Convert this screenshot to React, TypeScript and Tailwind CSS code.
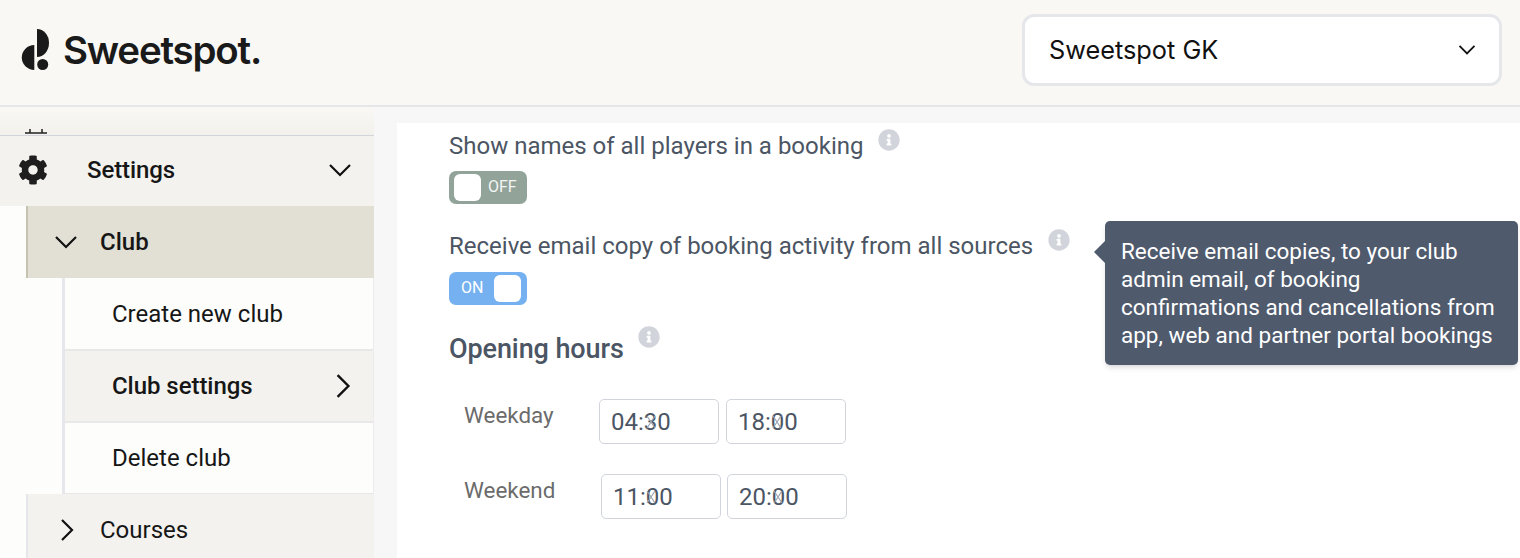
import React from "react";
import { FaCog, FaInfoCircle } from "react-icons/fa";

const Chev = ({ d, className }: { d: string; className: string }) => (
  <svg viewBox="0 0 24 24" fill="none" stroke="currentColor" strokeWidth="2.2" className={className}>
    <path d={d} />
  </svg>
);
const DOWN = "M2 7l10 10L22 7";
const RIGHT = "M7 2l10 10L7 22";

const Info = ({ className }: { className: string }) => (
  <FaInfoCircle className={"text-[#d1d5db] w-[22px] h-[22px] shrink-0 " + className} />
);

const Mark = () => (
  <span className="absolute left-0 top-1/2 -translate-x-1/2 -translate-y-1/2">
    <svg width="10" height="14" viewBox="0 0 10 14" stroke="#9ca3af" strokeWidth="1.2" fill="none" className="block">
      <path d="M1 1l8 12M9 1L1 13" />
    </svg>
  </span>
);

const TimeBox = ({ value, markX }: { value: string; markX: string }) => (
  <div className="relative w-[120px] h-[45px] rounded-[5px] border border-[#d1d5db] bg-white pl-[11px] flex items-center text-[24px] text-[#4b5563] font-['Roboto',sans-serif]">
    {value}
    <span className={"absolute inset-y-0 " + markX + " w-0"}>
      <Mark />
    </span>
  </div>
);

export default function App() {
  return (
    <div className="w-[1520px] h-[558px] overflow-hidden flex flex-col bg-[#f7f7f7] font-['Roboto',sans-serif]">
      <header className="h-[107px] shrink-0 bg-[#f9f8f5] border-b-2 border-[#e5e7eb] flex items-start justify-between pl-[21px] pr-[18px]">
        <div className="flex items-center gap-[13px] h-[100px]">
          <svg width="29" height="42" viewBox="0 0 29 42" className="text-[#1a1a1a]">
            <path d="M16 0a12 14 0 0 1 0 28z" fill="currentColor" />
            <path d="M13.3 16v25a12.5 12.5 0 0 1 0-25z" fill="currentColor" />
            <circle cx="21.7" cy="35.5" r="5.5" fill="currentColor" />
          </svg>
          <span className="font-['Inter',sans-serif] font-semibold text-[38.5px] tracking-[-1.2px] text-[#1a1a1a] leading-none">Sweetspot.</span>
        </div>
        <div className="mt-[14px] w-[480px] h-[72px] bg-white border-[3px] border-[#e5e7eb] rounded-[12px] flex items-center justify-between pl-[24px] pr-[22px]">
          <span className="font-['Inter',sans-serif] text-[25.3px] text-[#111111]">Sweetspot GK</span>
          <Chev d="M3 7l9 9 9-9" className="w-[20px] h-[20px] text-[#111111]" />
        </div>
      </header>

      <div className="flex flex-1 min-h-0">
        <aside className="w-[374px] shrink-0 overflow-hidden bg-[#fdfdfb] flex flex-col text-[24px] text-[#161616]">
          <div className="h-[28px] shrink-0 overflow-hidden bg-gradient-to-b from-[#f9f8f5] to-[#f2f1ec] flex items-end pl-[25px]">
            <svg width="22" height="6" viewBox="0 0 22 6" stroke="#222222" strokeWidth="1.5" fill="none">
              <path d="M0 4h22M5 0v4M17 0v4" />
            </svg>
          </div>
          <div className="h-[71px] shrink-0 bg-[#f3f2ee] border-t border-[#d1d5db] flex items-center pl-[18px] pr-[22px] pb-[2px]">
            <FaCog className="w-[30px] h-[30px] text-[#1e1e1e]" />
            <span className="ml-[39px] font-medium flex-1 tracking-[-0.1px]">Settings</span>
            <Chev d={DOWN} className="w-[24px] h-[24px] text-[#111111]" />
          </div>
          <div className="ml-[26px] h-[72px] shrink-0 bg-[#e2e0d4] border-l-2 border-[#c6c3b2] flex items-center pl-[26px] font-medium">
            <Chev d={DOWN} className="w-[24px] h-[24px] text-[#111111]" />
            <span className="ml-[22px]">Club</span>
          </div>
          <div className="ml-[62px] shrink-0 border-l-[3px] border-[#e5e7eb] border-r border-r-[#ececec]">
            <div className="h-[71px] flex items-center pl-[47px]">Create new club</div>
            <div className="h-[74px] flex items-center justify-between pl-[47px] pr-[17px] bg-[#f3f2ee] border-y-2 border-[#e8e8e8] font-medium tracking-[-0.05px]">
              Club settings
              <Chev d={RIGHT} className="w-[26px] h-[26px] text-[#111111]" />
            </div>
            <div className="h-[71px] flex items-center pl-[47px] border-b border-[#e8e8e8]">Delete club</div>
          </div>
          <div className="ml-[26px] h-[72px] shrink-0 bg-[#f3f2ee] border-l-2 border-[#e5e7eb] flex items-center pl-[27px]">
            <Chev d={RIGHT} className="w-[24px] h-[24px] text-[#111111]" />
            <span className="ml-[21px]">Courses</span>
          </div>
        </aside>

        <main className="flex-1 pt-[16px] pl-[23px]">
          <div className="relative h-full bg-white pl-[52px] text-[#4b5563]">
            <div className="flex items-start pt-[5px] h-[48px]">
              <span className="text-[24px] leading-[36px]">Show names of all players in a booking</span>
              <Info className="ml-[15px] mt-[1px]" />
            </div>
            <div className="w-[78px] h-[33px] rounded-[7px] bg-[#92a399] pl-[5px] flex items-center text-white text-[16px]">
              <span className="w-[27px] h-[27px] rounded-[6px] bg-white" />
              <span className="ml-[7px] mb-[2px] opacity-90">OFF</span>
            </div>
            <div className="flex items-start mt-[24px] h-[44px]">
              <span className="text-[24px] leading-[36px]">Receive email copy of booking activity from all sources</span>
              <Info className="ml-[15px] mt-[1px]" />
            </div>
            <div className="w-[78px] h-[33px] rounded-[7px] bg-[#75b1f0] pl-[12px] pr-[6px] flex items-center justify-between text-white text-[16px]">
              <span className="mb-[2px]">ON</span>
              <span className="w-[27px] h-[27px] rounded-[6px] bg-white" />
            </div>
            <div className="flex items-start mt-[20px]">
              <span className="text-[27px] leading-[48px] font-medium tracking-[-0.1px]">Opening hours</span>
              <Info className="ml-[14px] mt-[1px]" />
            </div>
            <div className="flex items-start mt-[26px] ml-[15px] h-[75px]">
              <span className="w-[135px] pt-[1px] text-[22.4px] leading-[30px] text-[#6b6b6b]">Weekday</span>
              <div className="flex gap-[7px]">
                <TimeBox value="04:30" markX="left-[51px]" />
                <TimeBox value="18:00" markX="left-[50px]" />
              </div>
            </div>
            <div className="flex items-start ml-[15px]">
              <span className="w-[137px] pt-[1px] text-[22.4px] leading-[30px] text-[#6b6b6b]">Weekend</span>
              <div className="flex gap-[6px]">
                <TimeBox value="11:00" markX="left-[49px]" />
                <TimeBox value="20:00" markX="left-[50px]" />
              </div>
            </div>

            <div className="absolute left-[708px] top-[98px] w-[413px] h-[144px] rounded-[5px] bg-[#4f5a6d] shadow-md text-white text-[22.5px] leading-[28px] pl-[16px] pt-[16px]">
              <span className="absolute -left-[11px] top-[20px] w-0 h-0 border-y-[11px] border-y-transparent border-r-[11px] border-r-[#4f5a6d]" />
              Receive email copies, to your club
              <br />
              admin email, of booking
              <br />
              confirmations and cancellations from
              <br />
              app, web and partner portal bookings
            </div>
          </div>
        </main>
      </div>
    </div>
  );
}
